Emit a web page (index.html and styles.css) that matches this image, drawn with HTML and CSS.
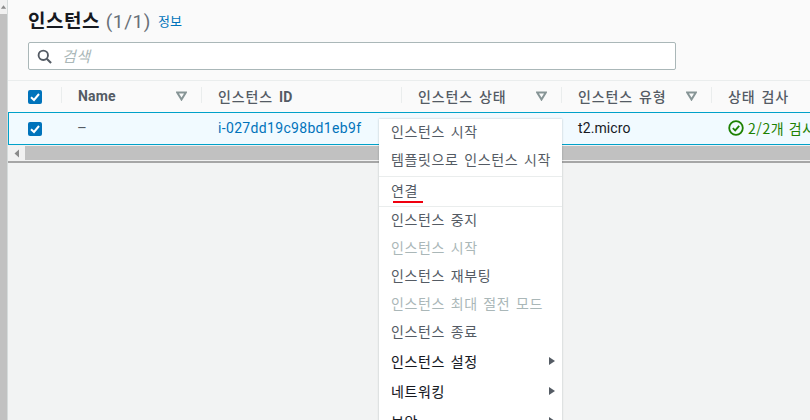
FILE: index.html
```html
<!DOCTYPE html>
<html lang="ko">
<head>
<meta charset="utf-8">
<title>인스턴스</title>
<link rel="stylesheet" href="styles.css">
</head>
<body>
<div class="page">
  <div class="vscroll">
    <div class="vscroll-up"><svg width="8" height="6" viewBox="0 0 8 6"><path d="M4 1 7 5H1z" fill="#8a8a8a"/></svg></div>
    <div class="vscroll-thumb"></div>
  </div>
  <div class="content">
    <header class="head">
      <h1 class="title">인스턴스 <span class="count">(1/1)</span></h1>
      <a class="info">정보</a>
    </header>
    <div class="search">
      <svg class="search-icon" width="15" height="15" viewBox="0 0 16 16"><circle cx="6.700" cy="6.700" r="5" fill="none" stroke="#545b64" stroke-width="2"/><path d="M10.400 10.400 15 15" stroke="#545b64" stroke-width="2.200" fill="none"/></svg>
      <span class="placeholder">검색</span>
    </div>
    <div class="table">
      <div class="row row-head">
        <div class="cell c-check"><span class="checkbox"><svg width="14" height="14" viewBox="0 0 14 14"><path d="M3 7.200 6 10 11 4" fill="none" stroke="#fff" stroke-width="2"/></svg></span></div>
        <div class="cell c-name"><b class="head-en">Name</b><svg class="sort" width="11" height="10" viewBox="0 0 11 10"><path d="M1.200 1.500h8.600L5.500 8.500z" fill="none" stroke="#879596" stroke-width="2"/></svg></div>
        <div class="cell c-id"><span class="head-ko">인스턴스 <b class="head-en">ID</b></span></div>
        <div class="cell c-state"><span class="head-ko">인스턴스 상태</span><svg class="sort" width="11" height="10" viewBox="0 0 11 10"><path d="M1.200 1.500h8.600L5.500 8.500z" fill="none" stroke="#879596" stroke-width="2"/></svg></div>
        <div class="cell c-type"><span class="head-ko">인스턴스 유형</span><svg class="sort" width="11" height="10" viewBox="0 0 11 10"><path d="M1.200 1.500h8.600L5.500 8.500z" fill="none" stroke="#879596" stroke-width="2"/></svg></div>
        <div class="cell c-check-status"><span class="head-ko">상태 검사</span></div>
      </div>
      <div class="row row-body">
        <div class="cell c-check"><span class="checkbox"><svg width="14" height="14" viewBox="0 0 14 14"><path d="M3 7.200 6 10 11 4" fill="none" stroke="#fff" stroke-width="2"/></svg></span></div>
        <div class="cell c-name"><span class="dash">–</span></div>
        <div class="cell c-id"><a class="link">i-027dd19c98bd1eb9f</a></div>
        <div class="cell c-state"></div>
        <div class="cell c-type"><span class="type">t2.micro</span></div>
        <div class="cell c-check-status status"><svg width="16" height="16" viewBox="0 0 16 16"><circle cx="8" cy="8" r="6.800" fill="none" stroke="#1d8102" stroke-width="1.800"/><path d="M4.800 8.200 7.200 10.400 11.200 5.900" fill="none" stroke="#1d8102" stroke-width="1.800"/></svg><span>2/2개 검사</span></div>
      </div>
      <div class="hscroll">
        <div class="hscroll-left"><svg width="6" height="9" viewBox="0 0 6 9"><path d="M5 0.500V8.500L0.500 4.500z" fill="#8a8a8a"/></svg></div>
        <div class="hscroll-thumb"></div>
      </div>
    </div>
  </div>
  <nav class="menu">
    <div class="group">
      <div class="item">인스턴스 시작</div>
      <div class="item">템플릿으로 인스턴스 시작</div>
    </div>
    <div class="group">
      <div class="item connect"><span class="underlined">연결</span></div>
    </div>
    <div class="group">
      <div class="item">인스턴스 중지</div>
      <div class="item disabled">인스턴스 시작</div>
      <div class="item">인스턴스 재부팅</div>
      <div class="item disabled">인스턴스 최대 절전 모드</div>
      <div class="item">인스턴스 종료</div>
      <div class="item strong">인스턴스 설정<i class="arrow"></i></div>
      <div class="item strong">네트워킹<i class="arrow"></i></div>
      <div class="item strong">보안<i class="arrow"></i></div>
    </div>
  </nav>
</div>
</body>
</html>
```
FILE: styles.css
```css
*, *::before, *::after { box-sizing: border-box; }
html, body { margin: 0; height: 100%; overflow: hidden; }
body { background: #f2f3f3; font-family: "Noto Sans CJK KR", "Noto Sans", sans-serif; color: #16191f; }
.page { position: relative; display: flex; width: 810px; height: 420px; overflow: hidden; }
.vscroll { width: 8px; flex: none; background: #f1f1f1; display: flex; flex-direction: column; border-right: 1px solid #d5dbdb; }
.vscroll-up { height: 14px; display: flex; align-items: center; justify-content: center; background: #f1f1f1; }
.vscroll-thumb { flex: 1; background: #c1c1c1; }
.content { flex: none; width: 820px; }
.head { height: 42px; background: #fafafa; display: flex; align-items: flex-start; padding: 5px 0 0 20px; }
.title { margin: 0; font-size: 19px; line-height: 30px; font-weight: 700; letter-spacing: .5px; color: #16191f; white-space: nowrap; }
.count { font-weight: 400; color: #687078; font-family: "Roboto", "Noto Sans CJK KR", sans-serif; letter-spacing: .6px; }
.info { font-size: 13px; line-height: 32px; color: #0073bb; margin-left: 7px; }
.search { height: 38px; background: #fafafa; position: relative; }
.search::before { content: ""; position: absolute; left: 20px; top: 0; width: 648px; height: 28px; background: #fff; border: 1px solid #aab7b8; border-radius: 2px; }
.search-icon { position: absolute; left: 29px; top: 7px; }
.placeholder { position: absolute; left: 54px; top: 3px; font-size: 15px; line-height: 21px; font-style: italic; letter-spacing: .5px; color: #aab7b8; }
.table { background: #fafafa; border-top: 1px solid #eaeded; }
.row { display: flex; align-items: center; }
.row-head { height: 31px; background: #fafafa; }
.row-body { height: 33px; background: #f1faff; border: 1px solid #00a1c9; }
.cell { flex: none; height: 100%; display: flex; align-items: center; font-size: 14px; position: relative; }
.row-head .cell { padding-bottom: 2px; }
.row-head .cell + .cell::before { content: ""; position: absolute; left: 0; top: 6px; height: 16px; width: 1px; background: #eaeded; }
.c-check { width: 53px; padding-left: 20px; }
.row-body .c-check { width: 52px; padding-left: 19px; }
.c-name { width: 140px; padding-left: 17px; justify-content: space-between; padding-right: 14px; }
.c-id { width: 200px; padding-left: 17px; }
.c-state { width: 160px; padding-left: 17px; justify-content: space-between; padding-right: 14px; }
.c-type { width: 150px; padding-left: 17px; justify-content: space-between; padding-right: 14px; }
.c-check-status { width: 116px; padding-left: 17px; }
.row-head .checkbox { position: relative; top: 1px; }
.row-body .cell { padding-bottom: 2px; }
.row-body .c-check { padding-bottom: 0; }
.row-body .c-name { padding-left: 16px; }
.checkbox { width: 14px; height: 14px; background: #0073bb; border-radius: 2px; display: block; }
.checkbox svg { display: block; }
.head-en { font-family: "Roboto", sans-serif; font-weight: 700; color: #545b64; font-size: 14px; letter-spacing: .2px; }
.head-ko { color: #545b64; font-weight: 500; white-space: nowrap; letter-spacing: .9px; word-spacing: 1px; }
.dash { color: #545b64; font-size: 15px; font-family: "Roboto", sans-serif; }
.link { color: #0073bb; font-family: "Roboto", sans-serif; font-size: 14px; letter-spacing: .33px; }
.type { font-family: "Roboto", sans-serif; font-size: 14px; letter-spacing: .1px; color: #16191f; }
.status { color: #1d8102; white-space: nowrap; gap: 4px; letter-spacing: .6px; }
.status svg { flex: none; }
.hscroll { height: 18px; display: flex; background: #f1f1f1; border-bottom: 2px solid #a6a6a6; padding: 1px 0; }
.hscroll-left { width: 17px; display: flex; align-items: center; justify-content: center; }
.hscroll-thumb { width: 795px; background: #c1c1c1; }
.menu { position: absolute; left: 379px; top: 119px; width: 183px; height: 320px; background: #fff; box-shadow: 0 0 2px rgba(0,28,36,.25); font-size: 14px; letter-spacing: .65px; color: #545b64; }
.group:first-child { padding-bottom: 1px; }
.group + .group { border-top: 1px solid #eaeded; }
.item { height: 28px; display: flex; align-items: center; justify-content: space-between; padding: 0 12px 4px; white-space: nowrap; word-spacing: 1px; }
.connect { height: 29px; }
.underlined { position: relative; }
.underlined::after { content: ""; position: absolute; left: 2px; right: -5px; bottom: -3px; height: 2px; background: #f0000f; }
.disabled { color: #aab7b8; }
.strong { color: #16191f; height: 30px; padding-bottom: 2px; -webkit-text-stroke: .1px #16191f; }
.arrow { width: 0; height: 0; border-left: 6px solid #545b64; border-top: 4px solid transparent; border-bottom: 4px solid transparent; margin-right: -5px; }
```
